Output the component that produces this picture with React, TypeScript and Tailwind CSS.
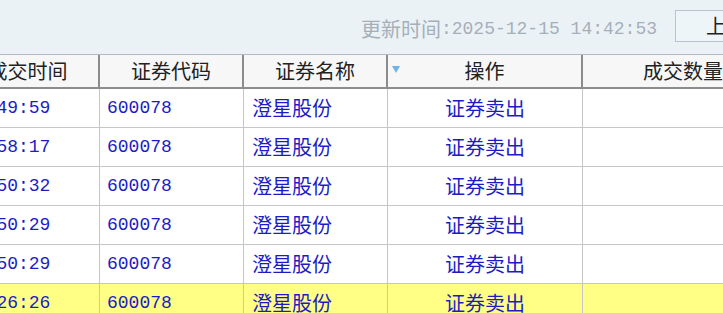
import React from 'react';

// splits a string into CJK runs and latin runs so each gets its own font
function Mixed({ text }: { text: string }) {
  const parts = text.split(/([\u3000-\u9fff\uff00-\uffef]+)/).filter(Boolean);
  return (
    <>
      {parts.map((p, i) =>
        /[\u3000-\u9fff\uff00-\uffef]/.test(p) ? (
          <span key={i} className="font-['Noto_Sans_CJK_SC',sans-serif] text-[20px]">{p}</span>
        ) : (
          <span key={i} className="font-['Liberation_Mono',monospace] text-[18px]">{p}</span>
        )
      )}
    </>
  );
}

const cols = [
  { title: '成交时间', w: 'w-[143px]', align: 'left' },
  { title: '证券代码', w: 'w-[144px]', align: 'left' },
  { title: '证券名称', w: 'w-[144px]', align: 'left' },
  { title: '操作', w: 'w-[195px]', align: 'center' },
  { title: '成交数量', w: 'w-[202px]', align: 'center' },
];

const rows = [
  { time: '14:49:59', code: '600078', name: '澄星股份', op: '证券卖出', qty: '' },
  { time: '14:58:17', code: '600078', name: '澄星股份', op: '证券卖出', qty: '' },
  { time: '14:50:32', code: '600078', name: '澄星股份', op: '证券卖出', qty: '' },
  { time: '14:50:29', code: '600078', name: '澄星股份', op: '证券卖出', qty: '' },
  { time: '14:50:29', code: '600078', name: '澄星股份', op: '证券卖出', qty: '' },
  { time: '14:26:26', code: '600078', name: '澄星股份', op: '证券卖出', qty: '', hl: true },
];

export default function App() {
  return (
    <div className="w-[723px] h-[313px] overflow-hidden bg-white">
      {/* top bar */}
      <div className="h-[54px] bg-[#eaf2f6] flex justify-end items-center mr-[-60px]">
        <div className="text-[#a6afb9] leading-none mt-[3px] flex items-center">
          <Mixed text="更新时间:2025-12-15 14:42:53" />
        </div>
        <button className="ml-[18px] w-[108px] h-[32px] mb-[2px] border border-[#b9c4cf] bg-[#eef5f9] text-left pl-[30px] text-[#222] leading-none">
          <Mixed text="上一页" />
        </button>
      </div>

      {/* table */}
      <div className="ml-[-43px] w-[830px]">
        <div className="flex h-[35px] bg-[#f7f7f7] border-t border-t-[#aebac6] border-b-2 border-b-[#8c8c8c]">
          {cols.map((c, i) => (
            <div
              key={i}
              className={`${c.w} shrink-0 relative flex items-center justify-center border-r-2 border-r-[#8c8c8c] text-[#222] leading-none`}
            >
              {c.title === '操作' && (
                <span className="absolute left-[4px] top-[11px] w-0 h-0 border-l-[4px] border-r-[4px] border-t-[7px] border-l-transparent border-r-transparent border-t-[#6db3ec]" />
              )}
              <Mixed text={c.title} />
            </div>
          ))}
        </div>
        {rows.map((r, i) => (
          <div
            key={i}
            className={`flex h-[39px] border-b border-b-[#c6c6c6] ${r.hl ? 'bg-[#ffff85]' : 'bg-white'} text-[#1c1cc6] leading-none`}
          >
            <div className="w-[143px] shrink-0 flex items-center pl-[7px] border-r border-r-[#c6c6c6]">
              <Mixed text={r.time} />
            </div>
            <div className="w-[144px] shrink-0 flex items-center pl-[7px] border-r border-r-[#c6c6c6]">
              <Mixed text={r.code} />
            </div>
            <div className="w-[144px] shrink-0 flex items-center pl-[8px] border-r border-r-[#c6c6c6]">
              <Mixed text={r.name} />
            </div>
            <div className="w-[195px] shrink-0 flex items-center justify-center border-r border-r-[#c6c6c6]">
              <Mixed text={r.op} />
            </div>
            <div className="w-[202px] shrink-0 flex items-center justify-center border-r border-r-[#c6c6c6]">
              <Mixed text={r.qty} />
            </div>
          </div>
        ))}
      </div>
    </div>
  );
}
